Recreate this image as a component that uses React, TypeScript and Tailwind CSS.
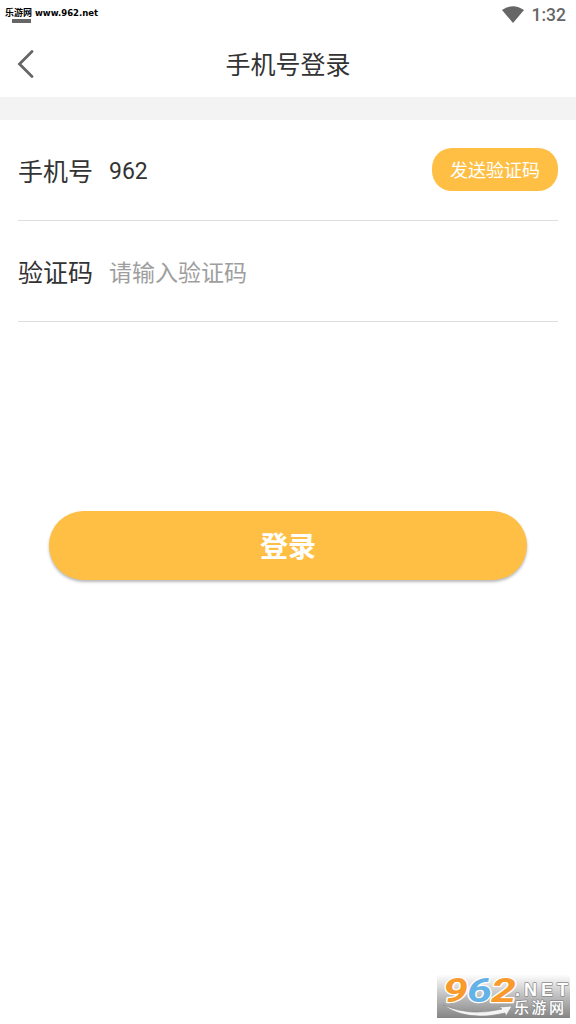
import type { ReactNode } from "react";

interface FieldRowProps {
  label: string;
  children: ReactNode;
}

function StatusBar() {
  return (
    <div className="relative h-[31px] flex justify-end items-center pr-[10px]">
      <svg className="w-[22px] h-[17px] mr-[8px] -mt-[3px]" viewBox="0 0 22 17">
        <path d="M0 4 Q11 -3.6 22 4 L11 17 Z" fill="#666" />
      </svg>
      <span className="-mt-[1px] font-['Roboto',sans-serif] text-[17.5px] leading-[20px] font-medium text-[#666]">1:32</span>

      {/* Site tag */}
      <div className="absolute left-3 top-[19px] w-[19px] h-1 bg-[#666]" />
      <div className="absolute left-[5px] top-[7px] flex gap-[3px] font-bold text-[9px] leading-[12px] text-black whitespace-nowrap">
        <span className="font-['Noto_Sans_CJK_SC',sans-serif]">乐游网</span>
        <span className="font-['DejaVu_Sans',sans-serif] text-[8.5px]">www.962.net</span>
      </div>
    </div>
  );
}

function Header() {
  return (
    <header className="relative h-[66px] pb-[3px] flex items-center justify-center">
      <svg className="absolute left-[17px] top-[19px] w-[17px] h-[28px]" viewBox="0 0 17 28" fill="none">
        <path d="M15 1.5 L2.5 14 L15 26.5" stroke="#666" strokeWidth="2.8" strokeLinecap="round" />
      </svg>
      <h1 className="text-[25px] leading-[36px] text-[#333]">手机号登录</h1>
    </header>
  );
}

function FieldRow({ label, children }: FieldRowProps) {
  return (
    <div className="h-[101px] pb-[1px] flex items-center border-b border-[#dedede]">
      <label className="w-[91px] text-[25px] leading-[36px] text-[#333]">{label}</label>
      {children}
    </div>
  );
}

function SiteLogo() {
  return (
    <svg className="absolute left-[437px] top-[975px] w-[133px] h-[43px] overflow-visible" viewBox="0 0 133 43">
      <defs>
        <linearGradient id="plate" x1="0" y1="0" x2="0" y2="1">
          <stop offset="0" stopColor="#fdfdfd" />
          <stop offset="0.5" stopColor="#bdbdbd" />
          <stop offset="1" stopColor="#858585" />
        </linearGradient>
      </defs>
      <rect width="133" height="43" fill="url(#plate)" />
      <path d="M6 30 Q33 42 65 34 L62 32 L75 31 L69 41 L68 38 Q30 47 6 30 Z" fill="#f4f4f4" stroke="#8a8a8a" strokeWidth="0.6" />
      <g
        className="font-['Roboto',sans-serif] font-bold italic"
        fontSize="34"
        stroke="#fff"
        strokeWidth="2.4"
        strokeLinejoin="round"
        paintOrder="stroke"
      >
        <text x="6" y="27" textLength="25" lengthAdjust="spacingAndGlyphs" fill="#f99a2c">9</text>
        <text x="30" y="27" textLength="25" lengthAdjust="spacingAndGlyphs" fill="#64b2e6">6</text>
        <text x="54" y="27" textLength="25" lengthAdjust="spacingAndGlyphs" fill="#f99a2c">2</text>
      </g>
      <g fill="#fff" stroke="#8c8c8c" strokeWidth="1.4" strokeLinejoin="round" paintOrder="stroke">
        <text x="78" y="21" fontSize="18" textLength="53" className="font-['Liberation_Sans',sans-serif] font-bold">.NET</text>
        <text x="77" y="38" fontSize="15" textLength="50" className="font-['Noto_Sans_CJK_SC',sans-serif] font-medium">乐游网</text>
      </g>
    </svg>
  );
}

export default function App() {
  return (
    <div className="relative w-[576px] h-[1024px] overflow-hidden bg-white font-['Noto_Sans_CJK_SC',sans-serif]">
      <StatusBar />
      <Header />
      <div className="h-[23px] bg-[#f3f3f3]" />

      {/* Login form */}
      <main className="px-[18px]">
        <FieldRow label="手机号">
          <span className="flex-1 pt-[6px] font-['Roboto',sans-serif] text-[23px] text-[#333]">962</span>
          <button className="w-[126px] h-[43px] -mt-[1px] rounded-[20px] bg-[#ffbf45] text-white text-[18px] leading-[26px]">
            发送验证码
          </button>
        </FieldRow>
        <FieldRow label="验证码">
          <span className="flex-1 text-[23px] leading-[34px] text-[#9e9e9e]">请输入验证码</span>
        </FieldRow>
        <button className="block w-[478px] h-[69px] pb-[2px] mx-[31px] mt-[189px] rounded-full bg-[#ffbf45] text-white text-[28px] font-bold leading-[40px] shadow-[0_2px_3px_rgba(0,0,0,0.28)]">
          登录
        </button>
      </main>

      <SiteLogo />
    </div>
  );
}
